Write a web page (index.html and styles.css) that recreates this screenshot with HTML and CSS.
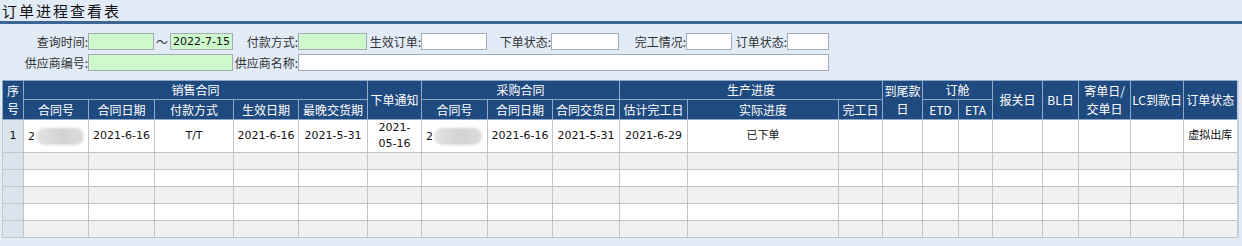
FILE: index.html
```html
<!DOCTYPE html>
<html lang="zh">
<head>
    <meta charset="UTF-8">
    <title>订单进程查看表</title>
    <link rel="stylesheet" href="styles.css">
</head>
<body>
    <main class="page">
        <h1 class="page__title">订单进程查看表</h1>
        <form class="filter">
            <div class="filter__row">
                <label class="filter__label filter__label--w88">查询时间:</label>
                <input class="filter__input filter__input--green" style="width:66px">
                <span class="filter__tilde">～</span>
                <input class="filter__input filter__input--green" style="width:63px" value="2022-7-15">
                <label class="filter__label" style="width:65px">付款方式:</label>
                <input class="filter__input filter__input--green" style="width:69px">
                <label class="filter__label" style="width:54px">生效订单:</label>
                <input class="filter__input" style="width:66px">
                <label class="filter__label" style="width:64px">下单状态:</label>
                <input class="filter__input" style="width:68px">
                <label class="filter__label" style="width:67px">完工情况:</label>
                <input class="filter__input" style="width:46px">
                <label class="filter__label" style="width:55px">订单状态:</label>
                <input class="filter__input" style="width:42px">
            </div>
            <div class="filter__row">
                <label class="filter__label filter__label--w88">供应商编号:</label>
                <input class="filter__input filter__input--green" style="width:145px">
                <label class="filter__label" style="width:65px">供应商名称:</label>
                <input class="filter__input" style="width:531px">
            </div>
        </form>

        <table class="grid">
            <colgroup>
                <col style="width:21px"><col style="width:65px"><col style="width:66px"><col style="width:79px">
                <col style="width:65px"><col style="width:69px"><col style="width:54px"><col style="width:66px">
                <col style="width:65px"><col style="width:67px"><col style="width:68px"><col style="width:151px">
                <col style="width:44px"><col style="width:40px"><col style="width:36px"><col style="width:34px">
                <col style="width:50px"><col style="width:36px"><col style="width:52px"><col style="width:53px">
                <col style="width:54px">
            </colgroup>
            <thead>
                <tr class="grid__head-top">
                    <th rowspan="2">序号</th>
                    <th colspan="5">销售合同</th>
                    <th rowspan="2">下单通知</th>
                    <th colspan="3">采购合同</th>
                    <th colspan="3">生产进度</th>
                    <th rowspan="2">到尾款日</th>
                    <th colspan="2">订舱</th>
                    <th rowspan="2">报关日</th>
                    <th rowspan="2">BL日</th>
                    <th rowspan="2">寄单日/交单日</th>
                    <th rowspan="2">LC到款日</th>
                    <th rowspan="2">订单状态</th>
                </tr>
                <tr class="grid__head-sub">
                    <th>合同号</th><th>合同日期</th><th>付款方式</th><th>生效日期</th><th>最晚交货期</th>
                    <th>合同号</th><th>合同日期</th><th>合同交货日</th>
                    <th>估计完工日</th><th>实际进度</th><th>完工日</th>
                    <th>ETD</th><th>ETA</th>
                </tr>
            </thead>
            <tbody>
                <tr class="grid__row grid__row--data">
                    <td class="grid__num">1</td>
                    <td class="grid__left">2<span class="grid__blur"></span></td>
                    <td>2021-6-16</td><td>T/T</td><td>2021-6-16</td><td>2021-5-31</td>
                    <td>2021-<br>05-16</td>
                    <td class="grid__left">2<span class="grid__blur"></span></td>
                    <td>2021-6-16</td><td>2021-5-31</td><td>2021-6-29</td>
                    <td>已下单</td><td></td><td></td><td></td><td></td><td></td><td></td><td></td><td></td>
                    <td>虚拟出库</td>
                </tr>
                <tr class="grid__row grid__row--alt"><td class="grid__num"></td><td></td><td></td><td></td><td></td><td></td><td></td><td></td><td></td><td></td><td></td><td></td><td></td><td></td><td></td><td></td><td></td><td></td><td></td><td></td><td></td></tr>
                <tr class="grid__row"><td class="grid__num"></td><td></td><td></td><td></td><td></td><td></td><td></td><td></td><td></td><td></td><td></td><td></td><td></td><td></td><td></td><td></td><td></td><td></td><td></td><td></td><td></td></tr>
                <tr class="grid__row grid__row--alt"><td class="grid__num"></td><td></td><td></td><td></td><td></td><td></td><td></td><td></td><td></td><td></td><td></td><td></td><td></td><td></td><td></td><td></td><td></td><td></td><td></td><td></td><td></td></tr>
                <tr class="grid__row"><td class="grid__num"></td><td></td><td></td><td></td><td></td><td></td><td></td><td></td><td></td><td></td><td></td><td></td><td></td><td></td><td></td><td></td><td></td><td></td><td></td><td></td><td></td></tr>
                <tr class="grid__row grid__row--alt"><td class="grid__num"></td><td></td><td></td><td></td><td></td><td></td><td></td><td></td><td></td><td></td><td></td><td></td><td></td><td></td><td></td><td></td><td></td><td></td><td></td><td></td><td></td></tr>
            </tbody>
        </table>
    </main>
</body>
</html>
```

FILE: styles.css
```css
body {
    margin: 0;
    background-color: #e2ecf7;
    font-family: "Noto Sans CJK SC", sans-serif;
    font-size: 12px;
    color: #222;
}
.page {
    width: 1242px;
    height: 246px;
    overflow: hidden;
}
.page__title {
    margin: 0;
    height: 21px;
    padding-left: 2px;
    font-size: 15px;
    font-weight: normal;
    line-height: 21px;
    letter-spacing: 2px;
    color: #111;
    border-bottom: 3px solid #3c6594;
}
.filter {
    padding-top: 9px;
}
.filter__row {
    display: flex;
    align-items: center;
    height: 17px;
    margin-bottom: 4px;
}
.filter__label {
    text-align: right;
    color: #333;
    white-space: nowrap;
    line-height: 17px;
}
.filter__label--w88 {
    width: 88px;
}
.filter__tilde {
    width: 16px;
    text-align: center;
    color: #333;
    line-height: 17px;
}
.filter__input {
    box-sizing: border-box;
    height: 17px;
    margin: 0;
    padding: 0 2px;
    border: 1px solid #a4abb5;
    background-color: #fff;
    font-family: "DejaVu Sans", sans-serif;
    font-size: 11px;
    color: #111;
}
.filter__input--green {
    background-color: #ccf8cc;
}
.grid {
    margin: 9px 0 0 2px;
    width: 1236px;
    table-layout: fixed;
    border-collapse: collapse;
    border-top: 1px solid #aab4c2;
    border-right: 2px solid #c3cfdc;
}
.grid th {
    background-color: #1f4a80;
    color: #fff;
    font-weight: normal;
    font-size: 12px;
    line-height: 18px;
    padding: 0 1px;
    border: 1px solid #8fa8c8;
    text-align: center;
}
.grid__head-top {
    height: 19px;
}
.grid__head-sub {
    height: 20px;
}
.grid td {
    border: 1px solid #c4c4c4;
    padding: 0 2px;
    text-align: center;
    font-family: "DejaVu Sans", "Noto Sans CJK SC", sans-serif;
    font-size: 11px;
    line-height: 16px;
    color: #111;
    white-space: nowrap;
}
.grid__row {
    height: 17px;
    background-color: #fff;
}
.grid__row--alt {
    background-color: #f0f0f0;
}
.grid__row--data {
    height: 33px;
}
.grid td.grid__num {
    background-color: #d9e4ef;
}
.grid td.grid__left {
    text-align: left;
    padding-left: 4px;
}
.grid__blur {
    display: inline-block;
    width: 48px;
    height: 17px;
    margin-left: 1px;
    vertical-align: middle;
    border-radius: 9px;
    background: linear-gradient(90deg, #e4e4e4, #d2d2d2 55%, #dcdcdc);
    filter: blur(1px);
}
```
